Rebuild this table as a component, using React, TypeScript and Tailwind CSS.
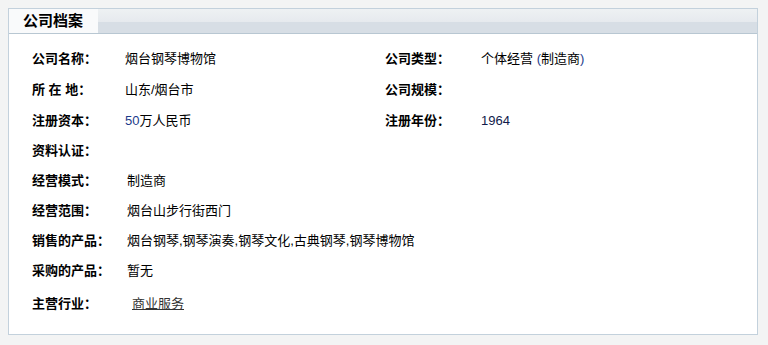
import React from 'react'

const font = { fontFamily: '"Liberation Sans", "Noto Sans CJK SC", sans-serif' }

type Pair = { label: string; value?: React.ReactNode }

const Cell: React.FC<Pair & { labelW: string }> = ({ label, value, labelW }) => (
    <div className="flex items-center">
        <div className={`${labelW} font-bold text-[13px] text-black shrink-0`}>{label}</div>
        <div className="text-[13px] text-black">{value}</div>
    </div>
)

const App: React.FC = () => {
    return (
        <div className="w-[768px] h-[345px] bg-[#f3f4f4] pt-2 pl-2" style={font}>
            <div className="w-[750px] h-[327px] border border-[#c3d1dc] bg-white flex flex-col">
                {/* header */}
                <div className="flex h-[25px] border-b border-[#b8c7d2]">
                    <div className="w-[89px] bg-[#f9fafb] flex items-center pl-[14px] text-[15px] font-bold text-black">
                        公司档案
                    </div>
                    <div className="flex-1 flex flex-col">
                        <div className="h-[13px] bg-gradient-to-b from-[#eef1f3] to-[#e6eaee]" />
                        <div className="flex-1 bg-[#d7dee5]" />
                    </div>
                </div>

                <div className="pl-[23px] pt-[10px]">
                    <div className="flex h-[30px] items-center">
                        <div className="w-[353px]">
                            <Cell labelW="w-[93px]" label="公司名称：" value="烟台钢琴博物馆" />
                        </div>
                        <Cell
                            labelW="w-[96px]"
                            label="公司类型："
                            value={
                                <span>
                                    个体经营 <span className="text-[#1b3a8a]">(</span>制造商
                                    <span className="text-[#1b3a8a]">)</span>
                                </span>
                            }
                        />
                    </div>
                    <div className="flex h-[31px] items-center">
                        <div className="w-[353px]">
                            <Cell labelW="w-[93px]" label="所 在 地：" value="山东/烟台市" />
                        </div>
                        <Cell labelW="w-[96px]" label="公司规模：" />
                    </div>
                    <div className="flex h-[31px] items-center">
                        <div className="w-[353px]">
                            <Cell
                                labelW="w-[93px]"
                                label="注册资本："
                                value={
                                    <span>
                                        <span className="text-[#1b3a8a]">50</span>万人民币
                                    </span>
                                }
                            />
                        </div>
                        <Cell labelW="w-[96px]" label="注册年份：" value={<span className="text-[#101a4a]">1964</span>} />
                    </div>
                    <div className="flex h-[30px] items-center">
                        <Cell labelW="w-[95px]" label="资料认证：" />
                    </div>
                    <div className="flex h-[30px] items-center">
                        <Cell labelW="w-[95px]" label="经营模式：" value="制造商" />
                    </div>
                    <div className="flex h-[30px] items-center">
                        <Cell labelW="w-[95px]" label="经营范围：" value="烟台山步行街西门" />
                    </div>
                    <div className="flex h-[30px] items-center">
                        <Cell labelW="w-[95px]" label="销售的产品：" value="烟台钢琴,钢琴演奏,钢琴文化,古典钢琴,钢琴博物馆" />
                    </div>
                    <div className="flex h-[30px] items-center">
                        <Cell labelW="w-[95px]" label="采购的产品：" value="暂无" />
                    </div>
                    <div className="flex h-[36px] items-center">
                        <Cell
                            labelW="w-[100px]"
                            label="主营行业："
                            value={<a className="underline text-[#333]">商业服务</a>}
                        />
                    </div>
                </div>
            </div>
        </div>
    )
}

export default App
